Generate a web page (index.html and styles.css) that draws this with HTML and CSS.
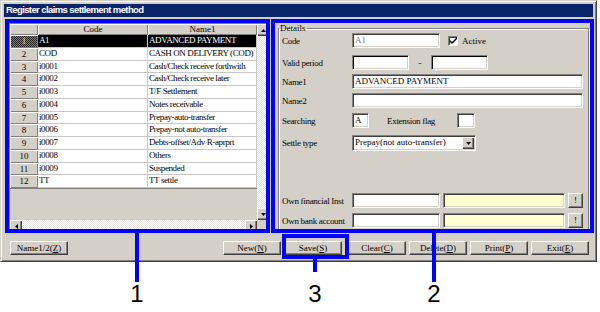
FILE: index.html
```html
<!DOCTYPE html>
<html lang="en">
<head>
    <meta charset="UTF-8">
    <meta name="viewport" content="width=device-width, initial-scale=1.0">
    <title>Register claims settlement method</title>
    <link rel="stylesheet" href="styles.css">
</head>
<body>

    <div class="window">
        <div class="titlebar">Register claims settlement method</div>
        <div class="main">
            <div class="grid-ctl">
                <div class="grid-view">
                    <div class="grid">
                        <div class="hd"></div>
                        <div class="hd">Code</div>
                        <div class="hd">Name1</div>

                        <div class="rh sel">1</div><div class="cell sel">A1</div><div class="cell sel">ADVANCED PAYMENT</div>
                        <div class="rh">2</div><div class="cell">COD</div><div class="cell">CASH ON DELIVERY (COD)</div>
                        <div class="rh">3</div><div class="cell">i0001</div><div class="cell">Cash/Check receive forthwith</div>
                        <div class="rh">4</div><div class="cell">i0002</div><div class="cell">Cash/Check receive later</div>
                        <div class="rh">5</div><div class="cell">i0003</div><div class="cell">T/F Settlement</div>
                        <div class="rh">6</div><div class="cell">i0004</div><div class="cell">Notes receivable</div>
                        <div class="rh">7</div><div class="cell">i0005</div><div class="cell">Prepay-auto-transfer</div>
                        <div class="rh">8</div><div class="cell">i0006</div><div class="cell">Prepay-not auto-transfer</div>
                        <div class="rh">9</div><div class="cell">i0007</div><div class="cell">Debts-offset/Adv R-aprprt</div>
                        <div class="rh">10</div><div class="cell">i0008</div><div class="cell">Others</div>
                        <div class="rh">11</div><div class="cell">i0009</div><div class="cell">Suspended</div>
                        <div class="rh">12</div><div class="cell">TT</div><div class="cell">TT settle</div>
                    </div>
                </div>
                <div class="vscroll">
                    <div class="arrow"><svg width="5" height="3" viewBox="0 0 5 3"><path d="M2.5 0L5 3H0z"/></svg></div>
                    <div class="arrow"><svg width="5" height="3" viewBox="0 0 5 3"><path d="M0 0h5L2.5 3z"/></svg></div>
                </div>
                <div class="hscroll">
                    <div class="arrow"><svg width="3" height="5" viewBox="0 0 3 5"><path d="M0 2.5L3 0v5z"/></svg></div>
                    <div class="arrow"><svg width="3" height="5" viewBox="0 0 3 5"><path d="M0 0l3 2.5L0 5z"/></svg></div>
                </div>
                <div class="sb-corner"></div>
            </div>

            <fieldset class="details">
                <legend>Details</legend>
                <div class="row">
                    <span class="lbl">Code</span>
                    <span class="field w-code disabled">A1</span>
                    <span class="check"><svg width="7" height="7" viewBox="0 0 7 7"><path d="M0 3l2 2 5-5v2l-5 5-2-2z"/></svg></span>
                    <span class="check-text">Active</span>
                </div>
                <div class="row row-valid">
                    <span class="lbl">Valid period</span>
                    <span class="field w-date dark"></span>
                    <span class="dash">-</span>
                    <span class="field w-date dark"></span>
                </div>
                <div class="row row-name1">
                    <span class="lbl">Name1</span>
                    <span class="field w-name">ADVANCED PAYMENT</span>
                </div>
                <div class="row row-name2">
                    <span class="lbl">Name2</span>
                    <span class="field w-name"></span>
                </div>
                <div class="row row-search">
                    <span class="lbl">Searching</span>
                    <span class="field w-short">A</span>
                    <span class="ext">Extension flag</span>
                    <span class="field w-flag"></span>
                </div>
                <div class="row row-settle">
                    <span class="lbl">Settle type</span>
                    <span class="field select">
                        <span>Prepay(not auto-transfer)</span>
                        <span class="drop"><svg width="5" height="3" viewBox="0 0 5 3"><path d="M0 0h5L2.5 3z"/></svg></span>
                    </span>
                </div>
                <div class="row row-fin">
                    <span class="lbl">Own financial Inst</span>
                    <span class="field w-code"></span>
                    <span class="field w-yellow"></span>
                    <span class="mini-btn">!</span>
                </div>
                <div class="row row-bank">
                    <span class="lbl">Own bank account</span>
                    <span class="field w-code"></span>
                    <span class="field w-yellow"></span>
                    <span class="mini-btn">!</span>
                </div>
            </fieldset>
        </div>

        <div class="buttons">
            <button class="btn">Name1/2(<u>Z</u>)</button>
            <div class="btn-group">
                <button class="btn">New(<u>N</u>)</button>
                <button class="btn">Save(<u>S</u>)</button>
                <button class="btn btn-clear">Clear(<u>C</u>)</button>
                <button class="btn">Delete(<u>D</u>)</button>
                <button class="btn">Print(<u>P</u>)</button>
                <button class="btn">Exit(<u>E</u>)</button>
            </div>
        </div>
    </div>

    <!-- annotation marks drawn over the screenshot -->
    <div class="box box-grid"></div>
    <div class="box box-details"></div>
    <div class="box box-save"></div>

    <div class="callout callout-1"><div class="stem"></div><div class="num">1</div></div>
    <div class="callout callout-3"><div class="stem"></div><div class="num">3</div></div>
    <div class="callout callout-2"><div class="stem"></div><div class="num">2</div></div>

</body>
</html>
```

FILE: styles.css
```css
body {
    margin: 0;
    background: #fff;
    font-family: "Liberation Serif", serif;
    font-size: 9px;
    color: #000;
}
.window {
    box-sizing: border-box;
    width: 597px;
    height: 262px;
    padding: 3px;
    background: #d4d0c8;
    border: 1px solid;
    border-color: #d4d0c8 #404040 #404040 #d4d0c8;
    box-shadow: inset 1px 1px #fff, inset -1px -1px #808080;
}
.titlebar {
    height: 13px;
    line-height: 13px;
    padding-left: 2px;
    background: #0a246a;
    color: #fff;
    font: bold 9.5px "Liberation Sans", sans-serif;
    letter-spacing: -0.6px;
}
.main {
    display: flex;
    gap: 8px;
    height: 210px;
    margin: 6px 0 0 5px;
}

/* grid control */
.grid-ctl {
    box-sizing: border-box;
    width: 261px;
    height: 210px;
    display: grid;
    grid-template-columns: 1fr 12px;
    grid-template-rows: 1fr 12px;
    border: 1px solid;
    border-color: #808080 #fff #fff #808080;
}
.grid-view {
    background: #d4d0c8;
    overflow: hidden;
}
.grid {
    display: grid;
    grid-template-columns: 28px 110px 109px;
    grid-template-rows: 11px repeat(12, 12.75px);
    border-bottom: 1px solid #808080;
}
.hd, .rh {
    background: #d4d0c8;
    text-align: center;
    box-shadow: inset 1px 1px #fff, inset -1px -1px #808080;
}
.hd {
    line-height: 11px;
}
.rh {
    line-height: 12.75px;
}
.rh.sel {
    background: repeating-conic-gradient(#202020 0 25%, #808080 0 50%) 0 0 / 2px 2px;
    color: #d4d0c8;
}
.cell {
    box-sizing: border-box;
    padding-left: 1px;
    line-height: 11.75px;
    letter-spacing: -0.4px;
    background: #fff;
    border-right: 1px solid #c8c8c8;
    border-bottom: 1px solid #c8c8c8;
    white-space: nowrap;
    overflow: hidden;
}
.cell.sel {
    background: #000;
    color: #fff;
}
.vscroll, .hscroll {
    display: flex;
    justify-content: space-between;
    background: repeating-conic-gradient(#fff 0 25%, #e4e2dc 0 50%) 0 0 / 2px 2px;
}
.vscroll {
    flex-direction: column;
}
.arrow {
    width: 12px;
    height: 12px;
    display: flex;
    align-items: center;
    justify-content: center;
    background: #d4d0c8;
    box-shadow: inset 1px 1px #fff, inset -1px -1px #404040, inset -2px -2px #808080;
}
.sb-corner {
    background: #d4d0c8;
}

/* details group */
.details {
    box-sizing: border-box;
    width: 311px;
    height: 207px;
    margin: 0;
    padding: 0 0 0 3px;
    border: 1px solid #808080;
    box-shadow: 1px 1px #fff, inset 1px 1px #fff;
}
.details legend {
    margin-left: -3px;
    padding: 0 1px;
    line-height: 10px;
}
.row {
    display: flex;
    align-items: center;
    height: 15px;
}
.row-valid { margin-top: 7px; }
.row-name1 { margin-top: 4px; }
.row-name2 { margin-top: 4px; }
.row-search { margin-top: 5px; }
.row-settle { margin-top: 7px; height: 16px; }
.row-fin { margin-top: 42px; }
.row-bank { margin-top: 5px; }
.lbl {
    flex: none;
    width: 70px;
    letter-spacing: -0.3px;
    white-space: nowrap;
}
.field {
    box-sizing: border-box;
    flex: none;
    height: 15px;
    padding: 0 2px;
    line-height: 13px;
    background: #fff;
    border: 1px solid;
    border-color: #808080 #fff #fff #808080;
    box-shadow: inset 1px 1px #404040, inset -1px -1px #d4d0c8;
    white-space: nowrap;
    overflow: hidden;
}
.field.dark {
    box-shadow: inset 1px 1px #000, inset -1px -1px #d4d0c8;
}
.field.disabled {
    color: #808080;
}
.w-code { width: 88px; }
.w-date { width: 57px; }
.w-name { width: 231px; }
.w-short { width: 17px; }
.w-flag { width: 18px; }
.w-yellow {
    width: 122px;
    margin-left: 3px;
    background: #ffffd0;
}
.check {
    box-sizing: border-box;
    width: 10px;
    height: 10px;
    margin-left: 8px;
    display: flex;
    align-items: center;
    justify-content: center;
    background: #fff;
    border: 1px solid;
    border-color: #808080 #fff #fff #808080;
    box-shadow: inset 1px 1px #404040;
}
.check-text {
    margin-left: 4px;
}
.dash {
    width: 22px;
    text-align: center;
}
.ext {
    box-sizing: border-box;
    width: 88px;
    padding-left: 18px;
    letter-spacing: -0.3px;
    white-space: nowrap;
}
.select {
    display: flex;
    justify-content: space-between;
    width: 124px;
    height: 16px;
    padding-right: 0;
}
.drop {
    width: 12px;
    height: 12px;
    margin: 1px 1px 0 0;
    display: flex;
    align-items: center;
    justify-content: center;
    background: #d4d0c8;
    box-shadow: inset 1px 1px #fff, inset -1px -1px #404040, inset -2px -2px #808080;
}
.mini-btn {
    box-sizing: border-box;
    width: 15px;
    height: 15px;
    margin-left: 3px;
    line-height: 13px;
    text-align: center;
    background: #d4d0c8;
    border: 1px solid;
    border-color: #fff #404040 #404040 #fff;
    box-shadow: inset -1px -1px #808080;
}

/* bottom buttons */
.buttons {
    display: flex;
    margin: 8px 4px 0 6px;
}
.btn-group {
    display: flex;
    gap: 3px;
    margin-left: auto;
}
.btn {
    box-sizing: border-box;
    width: 58px;
    height: 14px;
    padding: 0;
    font: 9px "Liberation Serif", serif;
    color: #000;
    background: #d4d0c8;
    border: 1px solid;
    border-color: #fff #404040 #404040 #fff;
    box-shadow: inset -1px -1px #808080;
}
.btn-clear {
    margin-left: 3px;
}

/* annotation marks */
.box {
    position: absolute;
    box-sizing: border-box;
    border: 4px solid #0000ff;
}
.box-grid { left: 5px; top: 19px; width: 265px; height: 214px; }
.box-details { left: 271px; top: 19px; width: 323px; height: 214px; }
.box-save { left: 282px; top: 234px; width: 67px; height: 25px; }
.callout {
    position: absolute;
    width: 20px;
    display: flex;
    flex-direction: column;
    align-items: center;
}
.stem {
    width: 4px;
    height: 49px;
    background: #0000ff;
}
.num {
    font: 24px/24px "Liberation Sans", sans-serif;
}
.callout-1 { left: 127px; top: 233px; }
.callout-2 { left: 424px; top: 233px; }
.callout-3 { left: 305px; top: 259px; }
.callout-3 .stem { height: 13px; }
.callout-3 .num { margin-top: 10px; }
```
